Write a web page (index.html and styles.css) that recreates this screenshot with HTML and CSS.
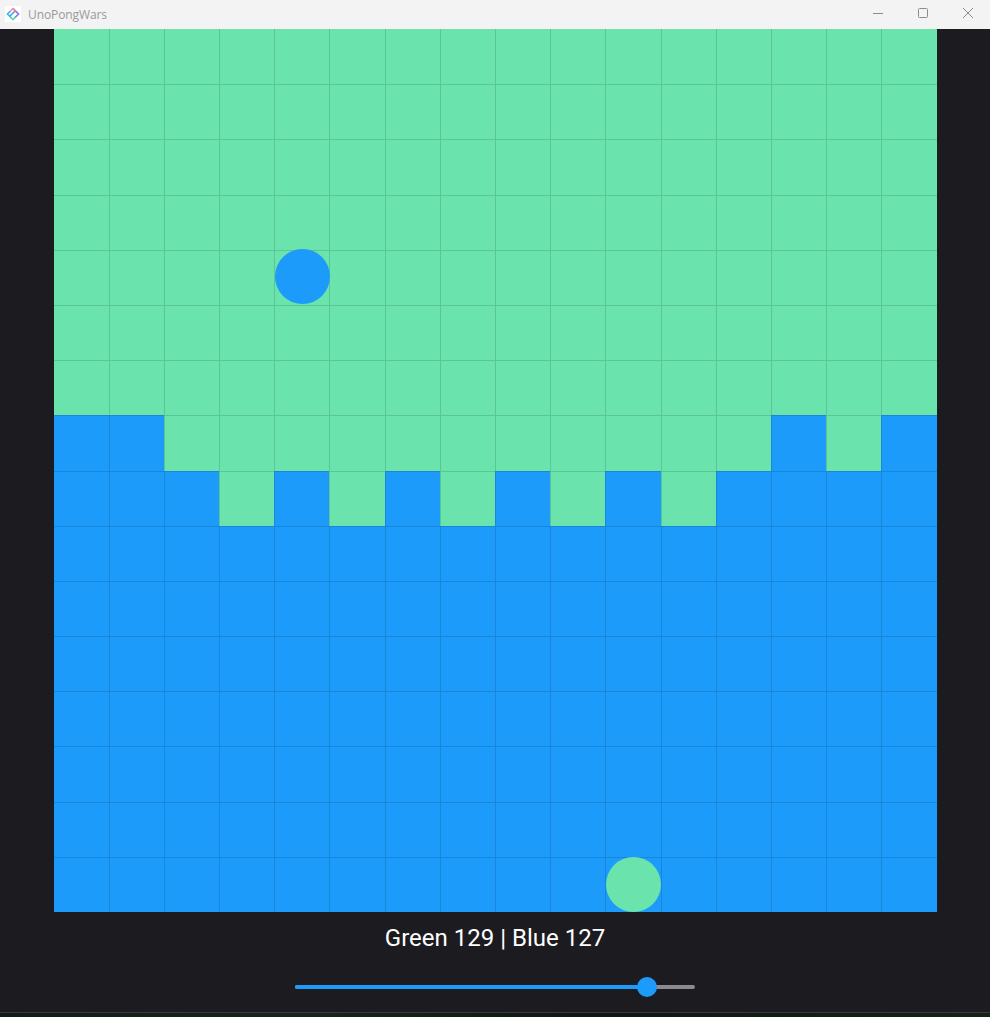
FILE: index.html
```html
<!DOCTYPE html>
<html lang="en">
<head>
<meta charset="utf-8">
<title>UnoPongWars</title>
<link rel="stylesheet" href="styles.css">
</head>
<body>
<div class="window">
  <header class="titlebar">
    <div class="app">
      <span class="app-icon">
        <svg width="14" height="14" viewBox="0 0 14 14">
          <path d="M7 1.5 L10.5 5" stroke="#ec6a8c" stroke-width="1.6" fill="none" stroke-linecap="round"/>
          <path d="M7 1.5 L3.5 5" stroke="#f08aa6" stroke-width="1.6" fill="none" stroke-linecap="round"/>
          <path d="M10.5 5 L12.5 7 L9 10.5" stroke="#8a6ff0" stroke-width="1.6" fill="none" stroke-linecap="round"/>
          <path d="M3.5 5 L1.5 7 L5 10.5" stroke="#3ab4f0" stroke-width="1.6" fill="none" stroke-linecap="round"/>
          <path d="M5 10.5 L7 12.5 L9 10.5" stroke="#5ad8a0" stroke-width="1.6" fill="none" stroke-linecap="round"/>
          <path d="M4.5 8.5 L8.5 4.5" stroke="#3aa0f0" stroke-width="1.6" fill="none" stroke-linecap="round"/>
        </svg>
      </span>
      <span class="app-name">UnoPongWars</span>
    </div>
    <div class="controls">
      <span class="ctl">
        <svg width="12" height="12" viewBox="0 0 12 12"><path d="M1 6.5 H11" stroke="#8c8c8c" stroke-width="1"/></svg>
      </span>
      <span class="ctl">
        <svg width="12" height="12" viewBox="0 0 12 12"><rect x="1.5" y="1.5" width="9" height="9" rx="1" stroke="#8c8c8c" stroke-width="1" fill="none"/></svg>
      </span>
      <span class="ctl">
        <svg width="12" height="12" viewBox="0 0 12 12"><path d="M1 1 L11 11 M11 1 L1 11" stroke="#8c8c8c" stroke-width="1"/></svg>
      </span>
    </div>
  </header>

  <main class="content">
    <div class="board">
      <div class="cell g"></div><div class="cell g"></div><div class="cell g"></div><div class="cell g"></div><div class="cell g"></div><div class="cell g"></div><div class="cell g"></div><div class="cell g"></div><div class="cell g"></div><div class="cell g"></div><div class="cell g"></div><div class="cell g"></div><div class="cell g"></div><div class="cell g"></div><div class="cell g"></div><div class="cell g"></div>
      <div class="cell g"></div><div class="cell g"></div><div class="cell g"></div><div class="cell g"></div><div class="cell g"></div><div class="cell g"></div><div class="cell g"></div><div class="cell g"></div><div class="cell g"></div><div class="cell g"></div><div class="cell g"></div><div class="cell g"></div><div class="cell g"></div><div class="cell g"></div><div class="cell g"></div><div class="cell g"></div>
      <div class="cell g"></div><div class="cell g"></div><div class="cell g"></div><div class="cell g"></div><div class="cell g"></div><div class="cell g"></div><div class="cell g"></div><div class="cell g"></div><div class="cell g"></div><div class="cell g"></div><div class="cell g"></div><div class="cell g"></div><div class="cell g"></div><div class="cell g"></div><div class="cell g"></div><div class="cell g"></div>
      <div class="cell g"></div><div class="cell g"></div><div class="cell g"></div><div class="cell g"></div><div class="cell g"></div><div class="cell g"></div><div class="cell g"></div><div class="cell g"></div><div class="cell g"></div><div class="cell g"></div><div class="cell g"></div><div class="cell g"></div><div class="cell g"></div><div class="cell g"></div><div class="cell g"></div><div class="cell g"></div>
      <div class="cell g"></div><div class="cell g"></div><div class="cell g"></div><div class="cell g"></div><div class="cell g"></div><div class="cell g"></div><div class="cell g"></div><div class="cell g"></div><div class="cell g"></div><div class="cell g"></div><div class="cell g"></div><div class="cell g"></div><div class="cell g"></div><div class="cell g"></div><div class="cell g"></div><div class="cell g"></div>
      <div class="cell g"></div><div class="cell g"></div><div class="cell g"></div><div class="cell g"></div><div class="cell g"></div><div class="cell g"></div><div class="cell g"></div><div class="cell g"></div><div class="cell g"></div><div class="cell g"></div><div class="cell g"></div><div class="cell g"></div><div class="cell g"></div><div class="cell g"></div><div class="cell g"></div><div class="cell g"></div>
      <div class="cell g"></div><div class="cell g"></div><div class="cell g"></div><div class="cell g"></div><div class="cell g"></div><div class="cell g"></div><div class="cell g"></div><div class="cell g"></div><div class="cell g"></div><div class="cell g"></div><div class="cell g"></div><div class="cell g"></div><div class="cell g"></div><div class="cell g"></div><div class="cell g"></div><div class="cell g"></div>
      <div class="cell b"></div><div class="cell b"></div><div class="cell g"></div><div class="cell g"></div><div class="cell g"></div><div class="cell g"></div><div class="cell g"></div><div class="cell g"></div><div class="cell g"></div><div class="cell g"></div><div class="cell g"></div><div class="cell g"></div><div class="cell g"></div><div class="cell b"></div><div class="cell g"></div><div class="cell b"></div>
      <div class="cell b"></div><div class="cell b"></div><div class="cell b"></div><div class="cell g"></div><div class="cell b"></div><div class="cell g"></div><div class="cell b"></div><div class="cell g"></div><div class="cell b"></div><div class="cell g"></div><div class="cell b"></div><div class="cell g"></div><div class="cell b"></div><div class="cell b"></div><div class="cell b"></div><div class="cell b"></div>
      <div class="cell b"></div><div class="cell b"></div><div class="cell b"></div><div class="cell b"></div><div class="cell b"></div><div class="cell b"></div><div class="cell b"></div><div class="cell b"></div><div class="cell b"></div><div class="cell b"></div><div class="cell b"></div><div class="cell b"></div><div class="cell b"></div><div class="cell b"></div><div class="cell b"></div><div class="cell b"></div>
      <div class="cell b"></div><div class="cell b"></div><div class="cell b"></div><div class="cell b"></div><div class="cell b"></div><div class="cell b"></div><div class="cell b"></div><div class="cell b"></div><div class="cell b"></div><div class="cell b"></div><div class="cell b"></div><div class="cell b"></div><div class="cell b"></div><div class="cell b"></div><div class="cell b"></div><div class="cell b"></div>
      <div class="cell b"></div><div class="cell b"></div><div class="cell b"></div><div class="cell b"></div><div class="cell b"></div><div class="cell b"></div><div class="cell b"></div><div class="cell b"></div><div class="cell b"></div><div class="cell b"></div><div class="cell b"></div><div class="cell b"></div><div class="cell b"></div><div class="cell b"></div><div class="cell b"></div><div class="cell b"></div>
      <div class="cell b"></div><div class="cell b"></div><div class="cell b"></div><div class="cell b"></div><div class="cell b"></div><div class="cell b"></div><div class="cell b"></div><div class="cell b"></div><div class="cell b"></div><div class="cell b"></div><div class="cell b"></div><div class="cell b"></div><div class="cell b"></div><div class="cell b"></div><div class="cell b"></div><div class="cell b"></div>
      <div class="cell b"></div><div class="cell b"></div><div class="cell b"></div><div class="cell b"></div><div class="cell b"></div><div class="cell b"></div><div class="cell b"></div><div class="cell b"></div><div class="cell b"></div><div class="cell b"></div><div class="cell b"></div><div class="cell b"></div><div class="cell b"></div><div class="cell b"></div><div class="cell b"></div><div class="cell b"></div>
      <div class="cell b"></div><div class="cell b"></div><div class="cell b"></div><div class="cell b"></div><div class="cell b"></div><div class="cell b"></div><div class="cell b"></div><div class="cell b"></div><div class="cell b"></div><div class="cell b"></div><div class="cell b"></div><div class="cell b"></div><div class="cell b"></div><div class="cell b"></div><div class="cell b"></div><div class="cell b"></div>
      <div class="cell b"></div><div class="cell b"></div><div class="cell b"></div><div class="cell b"></div><div class="cell b"></div><div class="cell b"></div><div class="cell b"></div><div class="cell b"></div><div class="cell b"></div><div class="cell b"></div><div class="cell b"></div><div class="cell b"></div><div class="cell b"></div><div class="cell b"></div><div class="cell b"></div><div class="cell b"></div>

      <div class="ball ball-blue"></div>
      <div class="ball ball-green"></div>
    </div>

    <div class="score">Green 129 | Blue 127</div>

    <div class="slider">
      <div class="track">
        <div class="fill"></div>
        <div class="thumb"></div>
      </div>
    </div>
  </main>

  <footer class="desktop"></footer>
</div>
</body>
</html>
```

FILE: styles.css
```css
* { box-sizing: border-box; }

html, body {
  margin: 0;
  padding: 0;
  height: 100%;
  overflow: hidden;
}

body {
  font-family: Roboto, "Liberation Sans", sans-serif;
  background: #1c1b20;
}

.window {
  display: flex;
  flex-direction: column;
  height: 1017px;
}

.titlebar {
  height: 29px;
  flex: 0 0 29px;
  background: #f3f3f3;
  display: flex;
  align-items: center;
  justify-content: space-between;
}

.app {
  display: flex;
  align-items: center;
  padding-left: 5px;
}

.app-icon {
  width: 16px;
  height: 16px;
  background: #ffffff;
  display: flex;
  align-items: center;
  justify-content: center;
  margin-top: -1px;
}

.app-name {
  margin-left: 7px;
  font-family: "Open Sans", "Noto Sans", sans-serif;
  font-size: 12px;
  color: #9a9a9a;
  letter-spacing: -0.1px;
  margin-top: -1px;
}

.controls {
  display: flex;
  height: 100%;
}

.ctl {
  width: 45px;
  height: 100%;
  display: flex;
  align-items: center;
  justify-content: center;
  padding-bottom: 3px;
}

.content {
  flex: 0 0 983px;
  display: flex;
  flex-direction: column;
  align-items: center;
  background: #1c1b20;
}

.board {
  position: relative;
  width: 883px;
  height: 883px;
  display: grid;
  grid-template-columns: repeat(16, 1fr);
  grid-template-rows: repeat(16, 1fr);
}

.cell {
  border-left: 1px solid rgba(0, 0, 0, 0.13);
  border-top: 1px solid rgba(0, 0, 0, 0.13);
}

.cell:nth-child(16n+1) { border-left: none; }
.cell:nth-child(-n+16) { border-top: none; }

.g { background: #6ae3ac; }
.b { background: #1d9bfa; }

.ball {
  position: absolute;
  width: 55px;
  height: 55px;
  border-radius: 50%;
}

.ball-blue {
  left: 221px;
  top: 220px;
  background: #1d9bfa;
}

.ball-green {
  left: 552px;
  top: 828px;
  background: #6ae3ac;
}

.score {
  margin-top: 11px;
  height: 30px;
  line-height: 30px;
  font-size: 24px;
  color: #ffffff;
}

.slider {
  margin-top: 24px;
  width: 400px;
  height: 20px;
  display: flex;
  align-items: center;
}

.track {
  position: relative;
  width: 100%;
  height: 4px;
  border-radius: 2px;
  background: #8b8a90;
}

.fill {
  width: 88%;
  height: 100%;
  border-radius: 2px;
  background: #1d9bfa;
}

.thumb {
  position: absolute;
  left: calc(88% - 10px);
  top: -8px;
  width: 20px;
  height: 20px;
  border-radius: 50%;
  background: #1d9bfa;
}

.desktop {
  flex: 1 1 auto;
  border-top: 1px solid #3a3a3c;
  background: linear-gradient(90deg, #0f1d16 0%, #14261c 30%, #0d1812 60%, #132219 100%);
}
```
